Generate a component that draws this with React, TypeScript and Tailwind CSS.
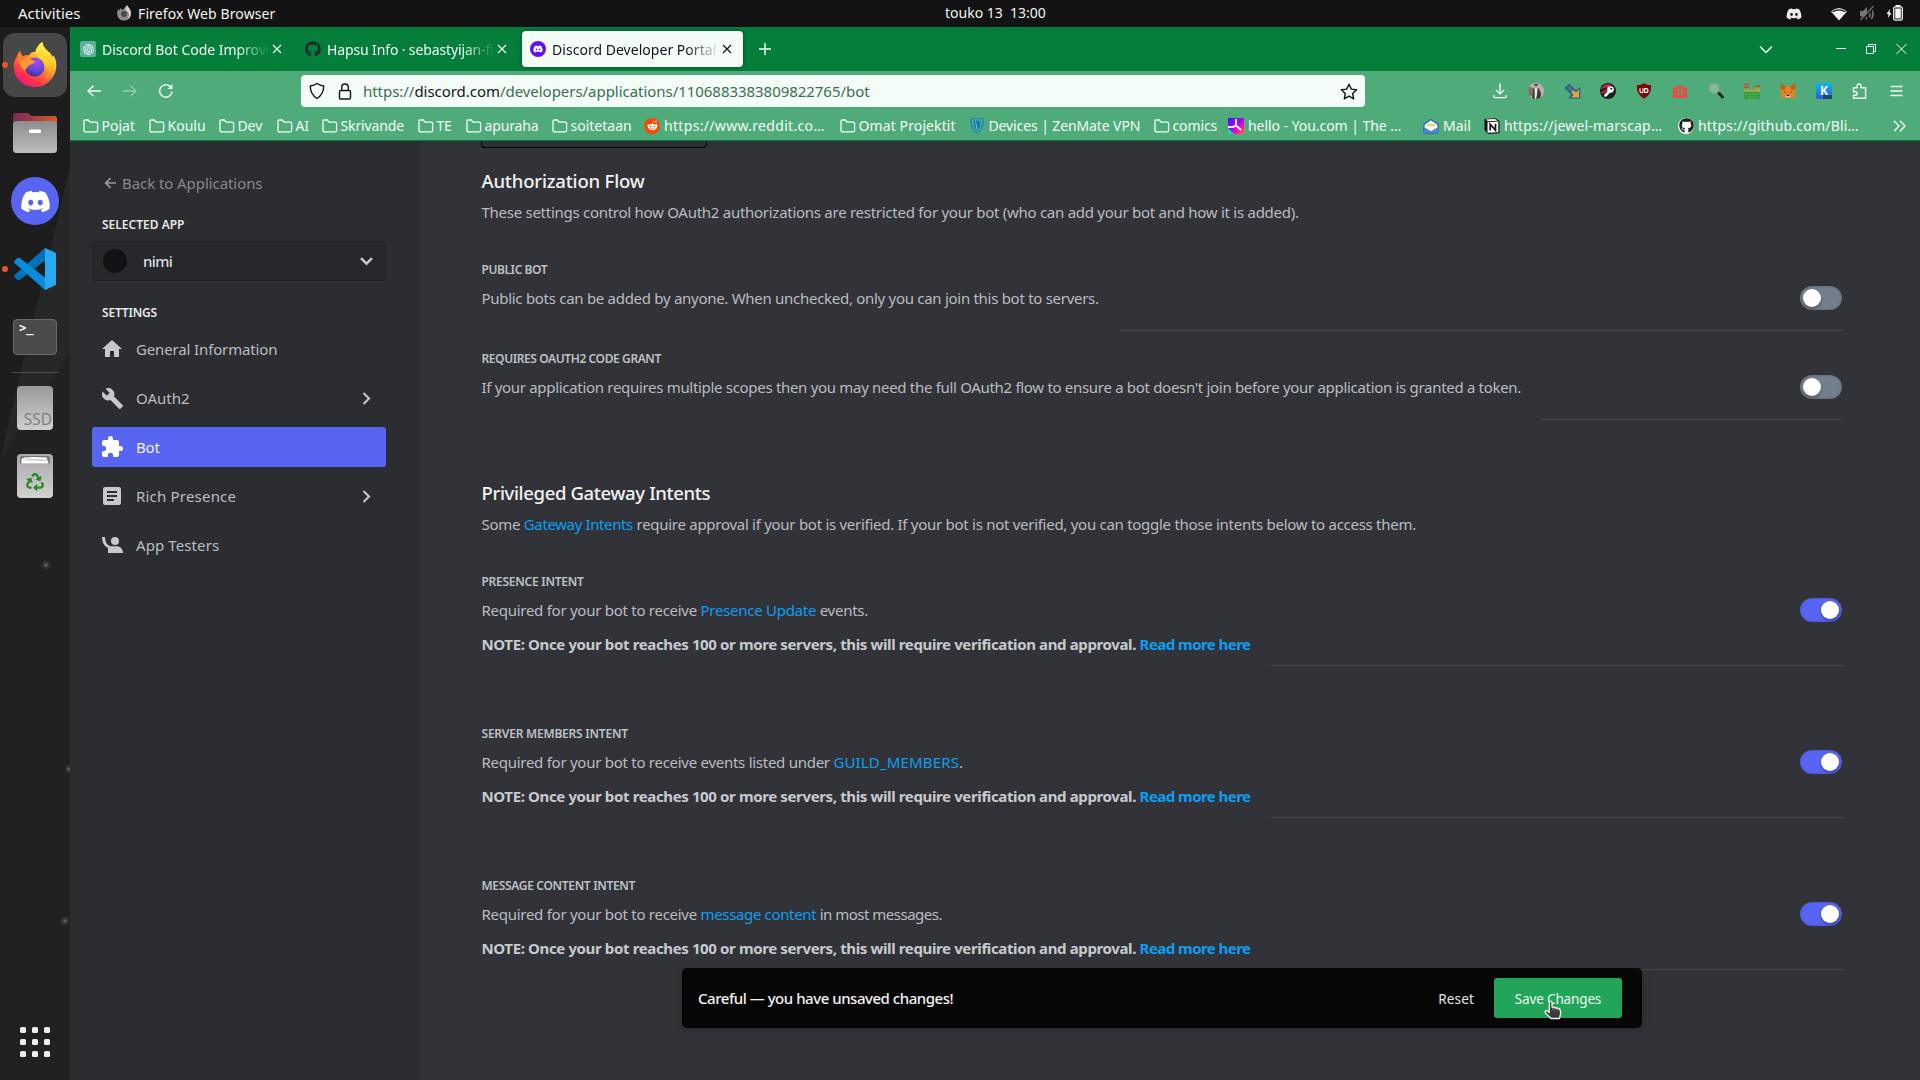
import type { ReactNode } from "react";
import { FaDiscord, FaGithub, FaRecycle, FaRedditAlien } from "react-icons/fa";
import { MdArticle, MdBuild, MdExtension, MdHome } from "react-icons/md";
import { RiOpenaiFill } from "react-icons/ri";

const UI = "font-['Noto_Sans',sans-serif]";

/* ---------- Desktop top bar ---------- */

function TopBar() {
  return (
    <div className="flex h-[27px] w-full shrink-0 items-center bg-[#131313] text-[14px] leading-[20px] text-[#f2f2f2]">
      <span className="-mt-[1px] ml-[18px] w-[98px] text-[15px]">Activities</span>
      <svg width="16" height="16" viewBox="0 0 16 16" className="-mt-[2px]">
        <path d="M8.4 3.6C9 1.6 10.5.6 11 0c.1 1.600 3.900 3.500 3.900 8A6.500 7 0 0 1 8 15.500 6.700 6.700 0 0 1 1.200 9C1 6.500 2 5 2.500 4c.2.9.5 1.200 1 1.300C3.700 4.200 4.300 3.400 5 3c0 .8.2 1.500 1.200 1.900z" fill="#8b8b8b" />
        <path d="M9.500 4C10 2 10.700 1 11 0c.1 1.600 3.900 3.500 3.900 8a6.800 6.800 0 0 1-4 6.500c2-2 2.600-4.500 1.600-6.500C12 6.500 10 6 9.500 4z" fill="#d2d2d2" />
        <circle cx="8" cy="9" r="3" fill="#4a4a4a" />
      </svg>
      <span className="ml-[6px] w-[807px] tracking-[0.11px]">Firefox Web Browser</span>
      <span className="-mt-[1px] whitespace-pre">touko 13  13:00</span>
      <div className="ml-auto flex items-center">
        <FaDiscord className="mr-[28px] size-[16px] text-[#ededed]" />
        <svg width="18" height="14" viewBox="0 0 18 14" className="mr-[11px]">
          <path d="M1 4.500Q9-2.500 17 4.500L9 13.500Z" fill="#f2f2f2" />
          <path d="M2.600 4.800Q9 .8 15.400 4.800" fill="none" stroke="#131313" strokeWidth="1.200" />
        </svg>
        <svg width="16" height="16" viewBox="0 0 16 16" className="mr-[11px] text-[#777]">
          <path d="M1 5h3l4-4v13L4 10.500H1z" fill="currentColor" />
          <path d="M10 5q2 3 0 6M12.300 3q3.500 5 0 10" fill="none" stroke="currentColor" strokeWidth="1.600" />
          <path d="M15 1 2 15" stroke="#131313" strokeWidth="2.500" />
          <path d="M14.500 0 1.500 14" stroke="currentColor" strokeWidth="1.200" />
        </svg>
        <svg width="17" height="16" viewBox="0 0 17 16" className="-mt-[2px] mr-[17px]">
          <path d="M4 4 .5 9h2L2 13l3.500-5H3.500z" fill="#f2f2f2" />
          <path d="M9.500 0h5v2h-5z" fill="#f2f2f2" />
          <rect x="7.700" y="1.800" width="8.600" height="13.400" rx="1.800" fill="none" stroke="#f2f2f2" strokeWidth="1.300" />
          <rect x="9.200" y="3.500" width="5.600" height="10" fill="#f2f2f2" />
        </svg>
      </div>
    </div>
  );
}

/* ---------- Dock ---------- */

function FirefoxLogo() {
  return (
    <svg width="44" height="46" viewBox="0 0 44 46">
      <defs>
        <linearGradient id="ffBody" x1="0.850" y1="0.050" x2="0.250" y2="1">
          <stop offset="0.100" stopColor="#fff04a" />
          <stop offset="0.380" stopColor="#ffb42c" />
          <stop offset="0.580" stopColor="#ff6a34" />
          <stop offset="0.800" stopColor="#ff3150" />
          <stop offset="1" stopColor="#e3148a" />
        </linearGradient>
        <linearGradient id="ffTail" x1="0.500" y1="0" x2="0.500" y2="1">
          <stop offset="0" stopColor="#fff254" />
          <stop offset="0.550" stopColor="#ffc928" />
          <stop offset="1" stopColor="#ff7a2e" />
        </linearGradient>
        <radialGradient id="ffGlobe" cx="0.600" cy="0.250" r="0.800">
          <stop offset="0" stopColor="#a64bf0" />
          <stop offset="0.600" stopColor="#6148cf" />
          <stop offset="1" stopColor="#33308f" />
        </radialGradient>
      </defs>
      <path d="M7 9c.5 2 1.500 4 3 5.200 2-.9 4-1.200 6.200-.9C18 9 22 9.500 22.500 10c1-5 4.500-8.500 6.800-10 .5 5 4 7.500 7 10.500 1.500 1 2.500 3 3 4.500l1.200-1.500C43 17 43.500 21 43.300 24.500 42.500 36 33.500 45 22 45 10 45 .5 36 .6 24 .7 20 2 17 4 14.500 4.400 12.500 5.500 10.500 7 9z" fill="url(#ffBody)" />
      <path d="M29.300 0c.5 5 4 7.500 7 10.500 5.500 5.500 6.500 11 4.500 17-1.800 5-5 8.500-9 10.500 2.500-4 3-9.500 1-13.500C30.500 19.500 25 18 22.500 10 23.500 5 27 1.500 29.300 0z" fill="url(#ffTail)" />
      <circle cx="21.800" cy="25" r="9.600" fill="url(#ffGlobe)" />
      <path d="M7 19c3-3 7-4 10.500-2.500 1 2 2.500 2.200 4.700 2.300-1 3-3.200 3.600-6 4.200-1.200 2.500-3.500 3.500-5 6C8.500 26 7 22.500 7 19z" fill="#ff9a2e" />
      <path d="M7 9c.5 2 1.500 4 3 5.200 2-.9 4-1.200 6.200-.9-1.500 1-2.400 2.200-2.700 3.700C10 17.500 7 19 5.500 22 5 17 5.500 12 7 9z" fill="#ff7c2c" />
    </svg>
  );
}

function FilesIcon() {
  return (
    <svg width="46" height="42" viewBox="0 0 46 42">
      <defs>
        <linearGradient id="folderBack" x1="0" x2="1">
          <stop offset="0" stopColor="#77285a" />
          <stop offset="1" stopColor="#e2561f" />
        </linearGradient>
        <linearGradient id="folderFront" x1="0" x2="0" y1="0" y2="1">
          <stop offset="0" stopColor="#8c8c8c" />
          <stop offset="1" stopColor="#bcbcbc" />
        </linearGradient>
      </defs>
      <path d="M1 4a3 3 0 0 1 3-3h12l3.500 3H42a3 3 0 0 1 3 3v14H1z" fill="url(#folderBack)" />
      <rect x="1" y="9" width="44" height="32" rx="3.500" fill="url(#folderFront)" />
      <rect x="17" y="17.500" width="12" height="3.500" rx="1" fill="#fff" />
    </svg>
  );
}

function CodeIcon() {
  return (
    <svg width="42" height="42" viewBox="0 0 42 42">
      <path d="M31 0v12.500L6 31.700a2.200 2.200 0 0 1-2.800 0L.8 29.500a1.800 1.800 0 0 1 0-2.700z" fill="#0070b8" />
      <path d="M31 42V29.500L6 10.300a2.200 2.200 0 0 0-2.800 0L.8 12.500a1.800 1.800 0 0 0 0 2.700z" fill="#0a8cdb" />
      <path d="M31 0 41 4.500a2 2 0 0 1 1 1.800v29.400a2 2 0 0 1-1 1.800L31 42z" fill="#27a9f3" />
    </svg>
  );
}

function DockSlot({ children, running }: { children: ReactNode; running?: boolean }) {
  return (
    <div className="relative flex h-[68px] w-[70px] shrink-0 items-center justify-center">
      {running && <span className="absolute left-[2px] top-[31px] size-[6px] rounded-full bg-[#e95420]" />}
      {children}
    </div>
  );
}

function Dock() {
  return (
    <div className="relative flex w-[70px] shrink-0 flex-col bg-[#212121] pt-[4px]">
      <svg width="70" height="1053" viewBox="0 0 70 1053" className="absolute left-0 top-0">
        <path d="M0 0h70v140L0 432z" fill="#1d1d1d" />
        <path d="M70 140 0 432 70 325z" fill="#272727" />
        {[[46, 538], [69, 742], [65, 894]].map(([x, y]) => (
          <g key={y} fill="#8a8a8a">
            <circle cx={x} cy={y} r="4.500" opacity="0.120" />
            <circle cx={x} cy={y} r="2.500" opacity="0.250" />
            <circle cx={x} cy={y} r="1.200" opacity="0.450" />
          </g>
        ))}
      </svg>
      <DockSlot running>
        <div className="flex size-[64px] items-center justify-center rounded-[12px] bg-[#474747]">
          <FirefoxLogo />
        </div>
      </DockSlot>
      <DockSlot>
        <FilesIcon />
      </DockSlot>
      <DockSlot>
        <div className="flex size-[48px] items-center justify-center rounded-full bg-[#5865f2]">
          <FaDiscord className="size-[31px] text-white" />
        </div>
      </DockSlot>
      <DockSlot running>
        <CodeIcon />
      </DockSlot>
      <DockSlot>
        <div className="flex h-[36px] w-[44px] rounded-[4px] border border-[#6a6a6a] bg-[#4b4b4b] pl-[5px] pt-[1px] font-['DejaVu_Sans_Mono',monospace] text-[12px] font-bold leading-[14px] text-white">
          &gt;_
        </div>
      </DockSlot>
      <div className="relative mx-[11px] mt-[1px] h-px shrink-0 bg-[#4a4a4a]" />
      <div className="h-[1px] shrink-0" />
      <DockSlot>
        <div className="flex h-[44px] w-[36px] items-end justify-end rounded-[4px] bg-linear-to-b from-[#9a9a9a] to-[#cfcfcf] pr-[1px] text-[15.500px] leading-[22px] text-[#808080]">
          SSD
        </div>
      </DockSlot>
      <DockSlot>
        <div className="flex h-[44px] w-[36px] flex-col items-center rounded-[4px] bg-linear-to-b from-[#a9a9a9] to-[#d2d2d2] pt-[2px]">
          <svg width="30" height="8" viewBox="0 0 30 8">
            <path d="M2 0h26q2 0 2 3v4.500H0V3q0-3 2-3z" fill="#777" />
            <path d="M1.500 7.500V3l3-1.500 9-.5 13 .5 2 6z" fill="#fff" />
            <path d="M3 4h24M6 2.500l20 2.500" stroke="#bbb" strokeWidth="0.700" />
          </svg>
          <FaRecycle className="mt-[9px] size-[18px] text-[#268b1f]" />
        </div>
      </DockSlot>
      <div className="relative mb-[23px] ml-[20px] mt-auto grid w-[30px] grid-cols-3 gap-[6px]">
        {Array.from({ length: 9 }, (_, i) => (
          <span key={i} className="size-[6px] rounded-[1.500px] bg-[#efefef]" />
        ))}
      </div>
    </div>
  );
}

/* ---------- Browser chrome ---------- */

function CloseX() {
  return (
    <svg width="10" height="10" viewBox="0 0 10 10" fill="none" stroke="currentColor" strokeWidth="1.200">
      <path d="M1 1l8 8M9 1l-8 8" />
    </svg>
  );
}

function Tab({ icon, title, active, tracking }: { icon: ReactNode; title: string; active?: boolean; tracking: string }) {
  return (
    <div
      className={
        "mr-[4px] flex h-[36px] w-[221px] items-center rounded-[4px] pl-[8px] " +
        (active ? "bg-[#f3fcf7] text-[#15141a] shadow-[0_0_4px_rgba(0,0,0,0.4)]" : "text-[#f3fcf7]")
      }
    >
      <span className="flex size-[16px] shrink-0 items-center justify-center">{icon}</span>
      <span
        className={
          "ml-[6px] mt-[2px] w-[168px] overflow-hidden whitespace-nowrap text-[14px] leading-[22px] [mask-image:linear-gradient(to_right,black_80%,transparent)] " +
          tracking
        }
      >
        {title}
      </span>
      <span className="ml-[2px]">
        <CloseX />
      </span>
    </div>
  );
}

function TabStrip() {
  return (
    <div className="flex h-[44px] shrink-0 items-center bg-[#057e3b] pl-[2px] text-[#f3fcf7]">
      <Tab
        tracking="tracking-[-0.030px]"
        title="Discord Bot Code Improve"
        icon={
          <span className="flex size-[16px] items-center justify-center rounded-[2px] bg-[#5fae9c]">
            <RiOpenaiFill className="size-[13px] text-white" />
          </span>
        }
      />
      <Tab tracking="tracking-[-0.130px]" title="Hapsu Info · sebastyijan-fi" icon={<FaGithub className="size-[16px] text-[#24292f]" />} />
      <Tab
        active
        tracking="tracking-[0.030px]"
        title="Discord Developer Portal"
        icon={
          <span className="flex size-[16px] items-center justify-center rounded-full bg-[#6610f2]">
            <FaDiscord className="size-[10px] text-white" />
          </span>
        }
      />
      <svg width="14" height="14" viewBox="0 0 14 14" className="ml-[11px]" stroke="currentColor" strokeWidth="1.400">
        <path d="M7 1v12M1 7h12" />
      </svg>
      <div className="ml-auto mr-[13px] flex items-center">
        <svg width="14" height="9" viewBox="0 0 14 9" className="mr-[63px]" fill="none" stroke="currentColor" strokeWidth="1.500">
          <path d="M1 1.500l6 6 6-6" />
        </svg>
        <svg width="10" height="10" viewBox="0 0 10 10" className="mr-[20px]" stroke="currentColor">
          <path d="M0 4.500h10" />
        </svg>
        <svg width="10" height="10" viewBox="0 0 10 10" className="mr-[20px]" fill="none" stroke="currentColor">
          <path d="M.5 2.500h7v7h-7zM2.500 2.500v-2h7v7h-2" />
        </svg>
        <svg width="11" height="10" viewBox="0 0 10 10" fill="none" stroke="currentColor" strokeWidth="1">
          <path d="M0 0l10 10M10 0L0 10" />
        </svg>
      </div>
    </div>
  );
}

function Slot({ children }: { children: ReactNode }) {
  return <div className="flex h-[32px] w-[36px] shrink-0 items-center justify-center">{children}</div>;
}

function Extensions() {
  return (
    <div className="ml-auto mr-[6px] flex items-center text-[#f3fcf7]">
      <Slot>
        <svg width="16" height="16" viewBox="0 0 16 16" fill="none" stroke="currentColor" strokeWidth="1.400">
          <path d="M8 .5v10M4 7l4 4 4-4M1.700 12v1.300q0 1.300 1.300 1.300h10q1.300 0 1.300-1.300V12" />
        </svg>
      </Slot>
      <Slot>
        <svg width="16" height="16" viewBox="0 0 16 16">
          <defs>
            <clipPath id="avatarClip">
              <circle cx="8" cy="8" r="8" />
            </clipPath>
          </defs>
          <g clipPath="url(#avatarClip)">
            <path d="M0 0h16v16H0z" fill="#b9b2ac" />
            <path d="M0 3l5 2-1 8H0z" fill="#7d7069" />
            <path d="M5 5.500l3-1 3 1 2 5-1 6H4z" fill="#3a3738" />
            <path d="M6.500 5h3L9 12l-1 4H6.800z" fill="#e8e6e4" />
            <circle cx="8" cy="3" r="2.200" fill="#c79a7d" />
            <path d="M5.700 2.500Q8-1 10.300 2.500z" fill="#332722" />
          </g>
        </svg>
      </Slot>
      <Slot>
        <svg width="17" height="17" viewBox="0 0 17 17">
          <path d="M5 .8.8 5l6.500 6.500L4.800 15.500H16V4.300L12 7.500z" fill="#1d5c7d" stroke="#2f7a9c" strokeWidth="0.800" />
          <path d="M9 6.800 7 9.300l2.500 2.200-2.300 3H15V6.500l-3 2.800z" fill="#f0a132" />
          <path d="M5 2.500 2.500 5l4.500 4.300 2.500-2.500z" fill="#4f7480" />
        </svg>
      </Slot>
      <Slot>
        <svg width="16" height="16" viewBox="0 0 16 16">
          <circle cx="8" cy="8" r="8" fill="#201e22" />
          <path d="M1 6Q4 0 11 1.500L8.500 4.500Q4 4 1 6.500z" fill="#e3223e" />
          <path d="M1 9.500 6 6.500l1 1.500-5 3z" fill="#e3223e" />
          <circle cx="10.500" cy="6.500" r="3.300" fill="#fff" />
          <circle cx="11.300" cy="5.800" r="1" fill="#201e22" />
          <path d="M8.300 7.500 4 12l.5 1.700L6.500 13.500 10 9.500z" fill="#fff" />
        </svg>
      </Slot>
      <Slot>
        <svg width="16" height="16" viewBox="0 0 16 16">
          <path d="M8 .3Q10.500 2.200 15.200 2.300 15.600 12 8 15.800.4 12 .8 2.300 5.500 2.200 8 .3z" fill="#800808" />
          <path d="M4 5.300v3q0 1.500 1.500 1.500T7 8.300v-3M8.700 5.600v3.900h1.200q2.100 0 2.100-2t-2.100-1.900z" fill="none" stroke="#fff" strokeWidth="1.100" />
        </svg>
      </Slot>
      <Slot>
        <svg width="14" height="13" viewBox="0 0 14 13">
          <path d="M1 2.500h2.500L5 .5h4l1.500 2H13a1 1 0 0 1 1 1V12a1 1 0 0 1-1 1H1a1 1 0 0 1-1-1V3.500a1 1 0 0 1 1-1z" fill="#e74c45" />
          <circle cx="7" cy="7.300" r="2.600" fill="none" stroke="#54a777" strokeWidth="1.200" />
        </svg>
      </Slot>
      <Slot>
        <svg width="16" height="16" viewBox="0 0 16 16">
          <circle cx="6.300" cy="5.500" r="4.600" fill="#7ebd96" stroke="#9c9c9c" strokeWidth="1.400" />
          <path d="M9.800 9l1.500 1.500" stroke="#aaa" strokeWidth="1.500" />
          <path d="M11 10.200l3.500 3.800" stroke="#1f1f1f" strokeWidth="2.800" strokeLinecap="round" />
        </svg>
      </Slot>
      <Slot>
        <svg width="16" height="16" viewBox="0 0 16 16">
          <path d="M0 .5h5v1.600H0zM0 3.200h5v1.700H0zM11 2.500h5v1.600h-5z" fill="#e0402f" />
          <path d="M0 6.500h5v2H0zM5.800 6.500h4.600v2H5.800zM11 5.500h5v3h-5z" fill="#c2a12a" />
          <path d="M0 9.500h5v1.700H0zM0 12h5v1.500H0zM0 14.300h5V16H0zM5.800 9.500h4.600v1.700H5.800zM5.800 12h4.600v1.500H5.800zM5.800 14.300h4.600V16H5.800zM11 9.500h5v1.700h-5zM11 12h5v1.500h-5zM11 14.300h5V16h-5z" fill="#3a9a22" />
        </svg>
      </Slot>
      <Slot>
        <svg width="16" height="16" viewBox="0 0 16 16">
          <path d="M.8.500 6 3.500h4L15.200.5l.6 5.500-1 4 .7 3-2.500 2.500-3-.8H6l-3 .8L.5 13l.7-3-1-4z" fill="#e8821e" />
          <path d="M.8.500 6 3.500 4.500 7 .3 6zM15.200.5 10 3.500l1.500 3.500 4.200-1z" fill="#b9601c" />
          <path d="M3.800 8.500l2 .5-.3 1zM12.200 8.500l-2 .5.3 1z" fill="#1f2c3b" />
          <path d="M6 12h4l.5 2.500h-5z" fill="#d9c6b8" />
          <path d="M6.700 11.800h2.600v1.300H6.700z" fill="#1d1d1d" />
        </svg>
      </Slot>
      <Slot>
        <div className="relative flex size-[16px] justify-center rounded-[2px] bg-linear-to-b from-[#10b6f2] to-[#2a55e6] text-[12px] font-bold leading-[15px] text-white">
          K
          <span className="absolute bottom-0 right-0 h-[4px] w-[9px] bg-[#24466e]" />
        </div>
      </Slot>
      <Slot>
        <svg width="16" height="16" viewBox="0 0 16 16" fill="none" stroke="currentColor" strokeWidth="1.400" strokeLinejoin="round">
          <path d="M1.500 4.700h3.700V3q0-2 1.900-2T9 3v1.700h4.600v10.600H1.500v-3h1.700q1.900 0 1.900-1.800T3.200 8.700H1.500z" />
        </svg>
      </Slot>
      <Slot>
        <svg width="13" height="12" viewBox="0 0 13 12" stroke="currentColor" strokeWidth="1.400">
          <path d="M.5 1.500h12M.5 6h12M.5 10.500h12" />
        </svg>
      </Slot>
    </div>
  );
}

function NavBar() {
  return (
    <div className="flex h-[40px] shrink-0 items-center pl-[6px] text-[#f3fcf7]">
      <Slot>
        <svg width="14" height="12" viewBox="0 0 14 12" fill="none" stroke="currentColor" strokeWidth="1.400">
          <path d="M14 6H1M6.500.7 1 6l5.500 5.300" />
        </svg>
      </Slot>
      <Slot>
        <svg width="14" height="12" viewBox="0 0 14 12" fill="none" stroke="currentColor" strokeWidth="1.400" opacity="0.400">
          <path d="M0 6h13M7.500.7 13 6l-5.500 5.300" />
        </svg>
      </Slot>
      <Slot>
        <svg width="16" height="16" viewBox="0 0 16 16" fill="none" stroke="currentColor" strokeWidth="1.500">
          <path d="M14 8.500a6.200 6.200 0 1 1-2.200-5.300l1.700 1.600" />
          <path d="M14.500 1v5h-5z" fill="currentColor" stroke="none" />
        </svg>
      </Slot>
      <div className="ml-[117px] flex h-[32px] w-[1064px] items-center rounded-[4px] bg-[#f3fcf7] text-[#15141a]">
        <svg width="16" height="18" viewBox="0 0 16 18" className="ml-[8px]" fill="none" stroke="currentColor" strokeWidth="1.400">
          <path d="M8 1.500Q11 3.500 14.700 4 14.800 12 8 16.500 1.200 12 1.300 4 5 3.500 8 1.500z" />
        </svg>
        <svg width="14" height="17" viewBox="0 0 14 17" className="ml-[13px]" fill="none" stroke="currentColor" strokeWidth="1.400">
          <rect x="1.500" y="7.500" width="11" height="8.500" rx="1.200" />
          <path d="M3.700 7.500V4.300a3.300 3.300 0 0 1 6.600 0v3.200" />
        </svg>
        <span className="ml-[11px] whitespace-nowrap text-[15px] leading-[22px] tracking-[-0.040px] text-[#3c6e51]">
          https://<span className="text-[#15141a]">discord.com</span>/developers/applications/1106883383809822765/bot
        </span>
        <svg width="18" height="17" viewBox="0 0 18 17" className="ml-auto mr-[7px]" fill="none" stroke="currentColor" strokeWidth="1.400" strokeLinejoin="round">
          <path d="M9 1.200l2.300 4.900 5.300.7-3.900 3.700 1 5.300L9 13.200l-4.700 2.600 1-5.300L1.400 6.800l5.300-.7z" />
        </svg>
      </div>
      <Extensions />
    </div>
  );
}

function Folder() {
  return (
    <svg width="16" height="14" viewBox="0 0 16 14" fill="none" stroke="currentColor" strokeWidth="1.300">
      <path d="M1 2.300Q1 1 2.300 1h3l1.800 2.200h6.200q1.300 0 1.300 1.300v7q0 1.300-1.300 1.300h-11Q1 12.800 1 11.500z" />
    </svg>
  );
}

const redditIcon = (
  <span className="flex size-[16px] items-center justify-center rounded-full bg-[#ff4500]">
    <FaRedditAlien className="size-[11px] text-white" />
  </span>
);

const shieldIcon = (
  <svg width="14" height="16" viewBox="0 0 14 16">
    <path d="M1 1q6-1.500 12 0 .8 10-6 14.500Q.2 11 1 1z" fill="none" stroke="#1b87c4" strokeWidth="1.400" />
    <path d="M3.500 3q3.500-.8 7 0 .3 6.500-3.500 9.500Q3.200 9.500 3.500 3z" fill="#1479b8" />
    <path d="M5.500 3.500 7 11" stroke="#7bc4c8" strokeWidth="1" />
  </svg>
);

const youIcon = (
  <svg width="16" height="16" viewBox="0 0 16 16">
    <defs>
      <linearGradient id="youA" x1="0" y1="0" x2="1" y2="1">
        <stop offset="0" stopColor="#4a12ff" />
        <stop offset="0.500" stopColor="#a50bf0" />
        <stop offset="0.750" stopColor="#ff1aa0" />
        <stop offset="1" stopColor="#ff7a1a" />
      </linearGradient>
    </defs>
    <path d="M0 0h16v16H0z" fill="url(#youA)" />
    <path d="M0 10l6 6H0z" fill="#16d5b6" />
    <path d="M0 9Q6 9.500 8 7.500V1M8 7.500l5 4.500" fill="none" stroke="#fff" strokeWidth="1.800" />
  </svg>
);

const mailIcon = (
  <svg width="16" height="16" viewBox="0 0 16 16">
    <path d="M1 6.500 8 1.500l7 5V14q0 1-1 1H2q-1 0-1-1z" fill="#fff" stroke="#2a62b8" strokeWidth="1.400" />
    <path d="M3.500 7h9v2L8 12 3.500 9z" fill="#fff" />
    <path d="M4 8q4-3 8 0" fill="none" stroke="#f0b429" strokeWidth="1.500" />
    <path d="M1 8.500 8 12.500l7-4V15H1z" fill="#4c84cf" />
    <path d="M1.500 9 8 12.700 14.500 9" fill="none" stroke="#fff" strokeWidth="0.900" />
  </svg>
);

const notionIcon = (
  <svg width="16" height="16" viewBox="0 0 16 16">
    <path d="M.5 1 11.500.3 15.500 3v12.300L4 16 .5 12z" fill="#111" />
    <path d="M3.500 4.200 14.300 3.500v10.700l-10.800.6z" fill="#fff" />
    <path d="M1.800 1.500 11 1l2.500 1.700-9.500.6z" fill="#fff" />
    <path d="M6.200 12.500V6.200l5.300 6.100V5.800" fill="none" stroke="#111" strokeWidth="1.700" />
  </svg>
);

const githubIcon = (
  <span className="flex size-[16px] items-center justify-center rounded-full bg-white">
    <FaGithub className="size-[15px] text-[#1b1f23]" />
  </span>
);

const BOOKMARKS: { t: string; c: string; icon?: ReactNode }[] = [
  { t: "Pojat", c: "w-[66px] tracking-normal" },
  { t: "Koulu", c: "w-[70px] tracking-normal" },
  { t: "Dev", c: "w-[58px] tracking-[-0.100px]" },
  { t: "AI", c: "w-[45px] tracking-[-0.200px]" },
  { t: "Skrivande", c: "w-[96px] tracking-[-0.120px]" },
  { t: "TE", c: "w-[48px] tracking-[-0.200px]" },
  { t: "apuraha", c: "w-[86px] tracking-[-0.150px]" },
  { t: "soitetaan", c: "w-[92.5px] tracking-normal" },
  { t: "https://www.reddit.co…", c: "w-[195.5px] tracking-[0.320px]", icon: redditIcon },
  { t: "Omat Projektit", c: "w-[129px] tracking-[0.110px]" },
  { t: "Devices | ZenMate VPN", c: "w-[185px] tracking-[-0.110px]", icon: shieldIcon },
  { t: "comics", c: "w-[74.5px] tracking-[-0.100px]" },
  { t: "hello - You.com | The …", c: "w-[195px] tracking-[-0.050px]", icon: youIcon },
  { t: "Mail", c: "w-[61px] tracking-normal", icon: mailIcon },
  { t: "https://jewel-marscap…", c: "w-[194px] tracking-[0.180px]", icon: notionIcon },
  { t: "https://github.com/Bli…", c: "w-[190px] tracking-[0.210px]", icon: githubIcon },
];

function BookmarksBar() {
  return (
    <div className="flex h-[29px] shrink-0 items-center pl-[12.500px] text-[14px] leading-[20px] text-[#f3fcf7]">
      {BOOKMARKS.map((b) => (
        <div key={b.t} className={"flex shrink-0 items-center whitespace-nowrap " + b.c}>
          <span className="flex w-[16px] shrink-0 justify-center">{b.icon ?? <Folder />}</span>
          <span className={b.icon ? "ml-[4px]" : "ml-[3px]"}>{b.t}</span>
        </div>
      ))}
      <svg width="13" height="12" viewBox="0 0 13 12" className="ml-auto mr-[14px]" fill="none" stroke="currentColor" strokeWidth="1.400">
        <path d="M1 .7 6 6l-5 5.300M7 .7 12 6l-5 5.300" />
      </svg>
    </div>
  );
}

/* ---------- Developer portal ---------- */

function ChevronRight() {
  return (
    <svg width="9" height="13" viewBox="0 0 9 13" className="ml-auto mr-[15px]" fill="none" stroke="#c4c9ce" strokeWidth="2.100">
      <path d="M1.500 1l5.500 5.500L1.500 12" />
    </svg>
  );
}

function NavItem({ icon, label, c, active, more }: { icon: ReactNode; label: string; c: string; active?: boolean; more?: boolean }) {
  return (
    <div className={"mb-[9px] flex h-[40px] items-center rounded-[3px] pl-[8px] " + (active ? "bg-[#5865f2] text-white" : "text-[#c4c9ce]")}>
      <span className="flex size-[24px] items-center justify-center">{icon}</span>
      <span className={"ml-[12px] text-[15px] leading-[20px] " + (active ? "text-[#f0f1fe] " : "text-[#b9bdc2] ") + c}>{label}</span>
      {more && <ChevronRight />}
    </div>
  );
}

function Sidebar() {
  return (
    <div className="flex w-[350px] shrink-0 flex-col bg-[#2b2d31] pl-[22px] pr-[34px] pt-[30px]">
      <div className="flex h-[24px] items-center pl-[12px] text-[15px] leading-[24px] tracking-[-0.070px] text-[#85898f]">
        <svg width="13" height="12" viewBox="0 0 13 12" className="mr-[5px]" fill="none" stroke="#949ba4" strokeWidth="1.700">
          <path d="M12 6H2M6.500 1.200 1.700 6l4.800 4.800" />
        </svg>
        Back to Applications
      </div>
      <div className="ml-[10px] mt-[22px] text-[12px] font-semibold leading-[16px] text-[#e6e8ea]">SELECTED APP</div>
      <div className="mt-[8px] flex h-[40px] items-center rounded-[3px] border border-[#222428] bg-[#26282c] pl-[10px] pr-[12px]">
        <span className="size-[24px] rounded-full bg-[#111214]" />
        <span className="ml-[16px] text-[15px] font-medium leading-[20px] tracking-[-0.600px] text-[#dbdee1]">nimi</span>
        <svg width="13" height="9" viewBox="0 0 13 9" className="ml-auto" fill="none" stroke="#c4c9ce" strokeWidth="2.400">
          <path d="M1 1.200l5.500 5.500L12 1.200" />
        </svg>
      </div>
      <div className="mb-[8px] ml-[10px] mt-[24px] text-[12px] font-semibold leading-[16px] tracking-[-0.200px] text-[#e6e8ea]">SETTINGS</div>
      <NavItem icon={<MdHome className="size-[24px]" />} label="General Information" c="tracking-[-0.140px]" />
      <NavItem icon={<MdBuild className="size-[23px]" />} label="OAuth2" c="tracking-normal" more />
      <NavItem icon={<MdExtension className="size-[24px]" />} label="Bot" c="tracking-[-0.200px]" active />
      <NavItem icon={<MdArticle className="size-[24px]" />} label="Rich Presence" c="tracking-[0.200px]" more />
      <NavItem
        icon={
          <svg width="22" height="16" viewBox="0 0 22 16" className="ml-[2px]" fill="currentColor">
            <circle cx="13" cy="4" r="4" />
            <path d="M0 0h3q0 7 5 9.200h8q5 1.500 5 6.800H6v-5Q0 8 0 0z" />
          </svg>
        }
        label="App Testers"
        c="tracking-[0.100px]"
      />
    </div>
  );
}

function Toggle({ on }: { on?: boolean }) {
  return (
    <span
      className={
        "ml-auto flex h-[24px] w-[42px] shrink-0 items-center rounded-full px-[3px] shadow-[inset_0_0_3px_rgba(0,0,0,0.25)] " +
        (on ? "justify-end bg-[#5865f2]" : "bg-[#747f8d]")
      }
    >
      <span className="size-[18px] rounded-full bg-white shadow-[0_2px_3px_rgba(0,0,0,0.3)]" />
    </span>
  );
}

function Link({ children, c }: { children: ReactNode; c?: string }) {
  return <span className={"text-[#0b9ff2] " + (c ?? "")}>{children}</span>;
}

function Label({ children, c }: { children: ReactNode; c: string }) {
  return <div className={"-ml-[0.5px] h-[16px] whitespace-nowrap text-[12px] font-semibold leading-[16px] text-[#bdc1c6] " + c}>{children}</div>;
}

function Intent({ label, labelTracking, children }: { label: string; labelTracking: string; children: ReactNode }) {
  return (
    <div className="mb-[60px]">
      <Label c={labelTracking}>{label}</Label>
      <div className="mt-[8px] flex h-[24px] items-center">
        <span className="-ml-[0.5px] whitespace-pre">{children}</span>
        <Toggle on />
      </div>
      <div className="-ml-[0.5px] mt-[10px] h-[24px] whitespace-pre font-bold tracking-[-0.370px] text-[#c7cace]">
        NOTE: Once your bot reaches 100 or more servers, this will require verification and approval.{" "}
        <Link c="tracking-[-0.540px]">Read more here</Link>
      </div>
      <div className="ml-auto mt-[9px] h-px w-[571px] bg-[#46484d]" />
    </div>
  );
}

function HandCursor() {
  return (
    <svg width="18" height="20" viewBox="0 0 18 20" className="absolute left-[50px] top-[22px]">
      <path
        d="M5.500 1.500q1.500-1 2.500.5V7l6.500 1.500q2 .5 2 2.500v3l-1 4.500H7L1.500 13q-.8-1.500.3-2.200 1-.5 2.200.7l1.200 1z"
        fill="#3a3a3a"
        stroke="#f4f4f4"
        strokeWidth="1.300"
        strokeLinejoin="round"
      />
      <path d="M8.500 7.500v3M11 8v3M13.600 8.700v2.600" stroke="#888" strokeWidth="0.700" />
    </svg>
  );
}

function Main() {
  return (
    <div className="relative flex-1 bg-[#313338]">
      <div className="flex flex-col pl-[62px] pr-[78px] text-[15px] leading-[24px] tracking-[-0.270px] text-[#b9bcc1]">
        <div className="-ml-[1px] h-[7px] w-[226px] rounded-b-[4px] border border-t-0 border-black bg-[#2e3035]" />
        <div className="-ml-[0.5px] mt-[21px] h-[24px] text-[18.500px] font-medium tracking-[-0.190px] text-[#f2f3f5]">Authorization Flow</div>
        <div className="-ml-[0.5px] mt-[7px] h-[24px] whitespace-nowrap">
          These settings control how OAuth2 authorizations are restricted for your bot (who can add your bot and how it is added).
        </div>
        <div className="h-[38px]" />
        <Label c="tracking-[-0.420px]">PUBLIC BOT</Label>
        <div className="mt-[8px] flex h-[24px] items-center">
          <span className="-ml-[0.5px] whitespace-nowrap tracking-[-0.288px]">
            Public bots can be added by anyone. When unchecked, only you can join this bot to servers.
          </span>
          <Toggle />
        </div>
        <div className="ml-auto mt-[20px] h-px w-[722px] bg-[#46484d]" />
        <div className="h-[20px]" />
        <Label c="tracking-[-0.400px]">REQUIRES OAUTH2 CODE GRANT</Label>
        <div className="mt-[8px] flex h-[24px] items-center">
          <span className="-ml-[0.5px] whitespace-nowrap tracking-[-0.309px]">
            If your application requires multiple scopes then you may need the full OAuth2 flow to ensure a bot doesn't join before your application is
            granted a token.
          </span>
          <Toggle />
        </div>
        <div className="ml-auto mt-[20px] h-px w-[301px] bg-[#46484d]" />
        <div className="-ml-[0.5px] mt-[61px] h-[24px] text-[18.500px] font-medium tracking-[-0.350px] text-[#f2f3f5]">Privileged Gateway Intents</div>
        <div className="-ml-[0.5px] mt-[7px] h-[24px] whitespace-pre tracking-[-0.278px]">
          Some <Link c="tracking-[-0.380px]">Gateway Intents</Link> require approval if your bot is verified. If your bot is not verified, you can toggle those
          {" intents below to access them."}
        </div>
        <div className="h-[38px]" />
        <Intent label="PRESENCE INTENT" labelTracking="tracking-[-0.260px]">
          Required for your bot to receive <Link>Presence Update</Link> events.
        </Intent>
        <Intent label="SERVER MEMBERS INTENT" labelTracking="tracking-[-0.220px]">
          Required for your bot to receive events listed under <Link c="tracking-[0.160px]">GUILD_MEMBERS</Link>.
        </Intent>
        <Intent label="MESSAGE CONTENT INTENT" labelTracking="tracking-[-0.320px]">
          Required for your bot to receive <Link c="tracking-[-0.350px]">message content</Link>
          <span className="tracking-[-0.500px]"> in most messages.</span>
        </Intent>
      </div>
      <div className="absolute left-[262px] top-[827px] flex h-[60px] w-[960px] items-center rounded-[5px] bg-[#060607] pl-[16px] pr-[20px] shadow-[0_2px_10px_rgba(0,0,0,0.2)]">
        <span className="text-[15px] font-medium leading-[20px] tracking-[-0.470px] text-[#f2f3f5]">Careful — you have unsaved changes!</span>
        <span className="ml-auto mt-[1px] text-[13.500px] leading-[18px] tracking-[0.150px] text-[#e3e5e8]">Reset</span>
        <div className="relative ml-[20px] flex h-[40px] w-[128px] items-center justify-center rounded-[3px] bg-[#23a559] text-[13.500px] leading-[18px] tracking-[-0.150px] text-[#eef8f2]">
          <span className="mt-[1px]">Save Changes</span>
          <HandCursor />
        </div>
      </div>
    </div>
  );
}

export default function App() {
  return (
    <div className={"flex h-[1080px] w-[1920px] flex-col overflow-hidden bg-[#131313] " + UI}>
      <TopBar />
      <div className="flex min-h-0 flex-1">
        <Dock />
        <div className="flex min-w-0 flex-1 flex-col">
          <TabStrip />
          <div className="flex h-[70px] shrink-0 flex-col border-b border-[#057e3b] bg-[#4fac7a]">
            <NavBar />
            <BookmarksBar />
          </div>
          <div className="flex min-h-0 flex-1">
            <Sidebar />
            <Main />
          </div>
        </div>
      </div>
    </div>
  );
}
